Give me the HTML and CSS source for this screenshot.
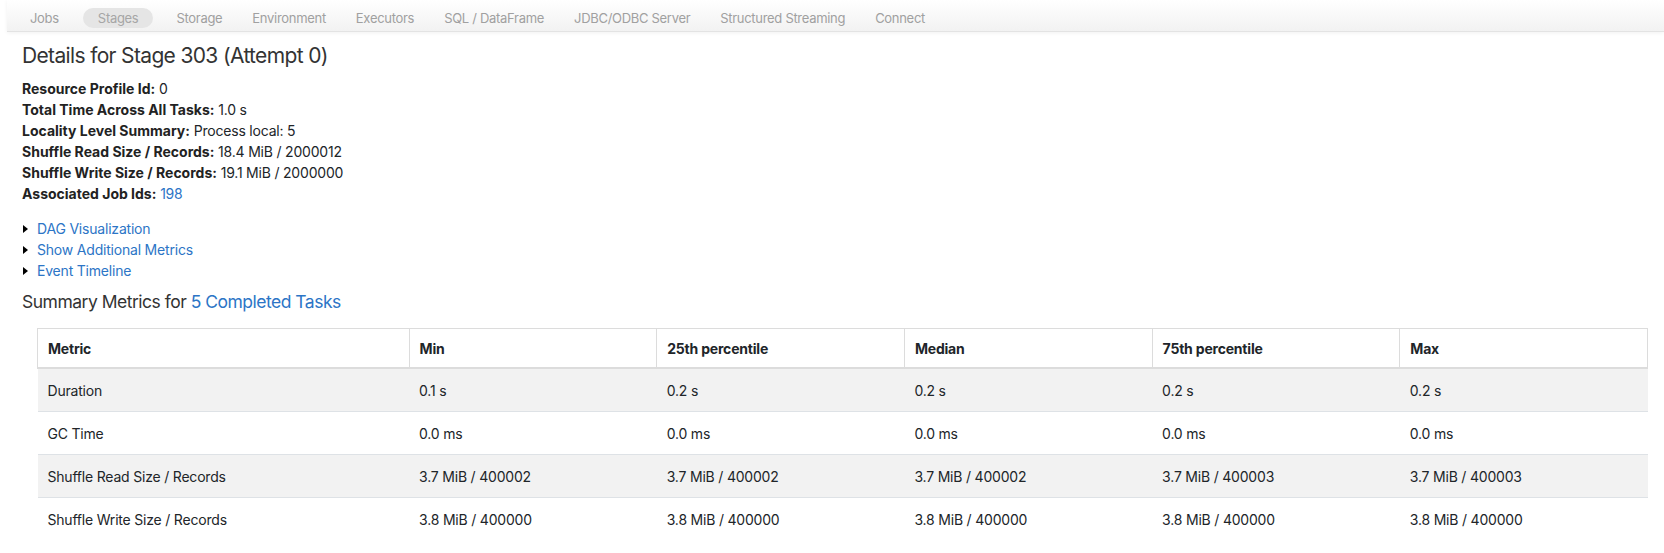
FILE: index.html
```html
<!DOCTYPE html>
<html lang="en">
<head>
<meta charset="utf-8">
<title>Stage Details</title>
<link rel="stylesheet" href="styles.css">
</head>
<body>
<nav class="navbar">
  <ul class="nav">
    <li><a class="nav-link" href="#">Jobs</a></li>
    <li><a class="nav-link active" href="#">Stages</a></li>
    <li><a class="nav-link" href="#">Storage</a></li>
    <li><a class="nav-link" href="#">Environment</a></li>
    <li><a class="nav-link" href="#">Executors</a></li>
    <li><a class="nav-link" href="#">SQL / DataFrame</a></li>
    <li><a class="nav-link" href="#">JDBC/ODBC Server</a></li>
    <li><a class="nav-link" href="#">Structured Streaming</a></li>
    <li><a class="nav-link" href="#">Connect</a></li>
  </ul>
</nav>
<main class="content">
  <h3 class="title">Details for Stage 303 (Attempt 0)</h3>
  <ul class="info">
    <li><strong>Resource Profile Id:</strong> 0</li>
    <li><strong>Total Time Across All Tasks:</strong> 1.0 s</li>
    <li><strong>Locality Level Summary:</strong> Process local: 5</li>
    <li><strong>Shuffle Read Size / Records:</strong> 18.4 MiB / 2000012</li>
    <li><strong>Shuffle Write Size / Records:</strong> 19.1 MiB / 2000000</li>
    <li><strong>Associated Job Ids:</strong> <a class="link" href="#">198</a></li>
  </ul>
  <ul class="toggles">
    <li><span class="arrow"></span><a class="link" href="#">DAG Visualization</a></li>
    <li><span class="arrow"></span><a class="link" href="#">Show Additional Metrics</a></li>
    <li><span class="arrow"></span><a class="link" href="#">Event Timeline</a></li>
  </ul>
  <h4 class="summary">Summary Metrics for <a class="link" href="#">5 Completed Tasks</a></h4>
  <div class="table-wrap">
    <table class="metrics">
      <thead>
        <tr>
          <th class="col-first">Metric</th>
          <th>Min</th>
          <th>25th percentile</th>
          <th>Median</th>
          <th>75th percentile</th>
          <th>Max</th>
        </tr>
      </thead>
      <tbody>
        <tr class="odd">
          <td>Duration</td><td>0.1 s</td><td>0.2 s</td><td>0.2 s</td><td>0.2 s</td><td>0.2 s</td>
        </tr>
        <tr>
          <td>GC Time</td><td>0.0 ms</td><td>0.0 ms</td><td>0.0 ms</td><td>0.0 ms</td><td>0.0 ms</td>
        </tr>
        <tr class="odd">
          <td>Shuffle Read Size / Records</td><td>3.7 MiB / 400002</td><td>3.7 MiB / 400002</td><td>3.7 MiB / 400002</td><td>3.7 MiB / 400003</td><td>3.7 MiB / 400003</td>
        </tr>
        <tr>
          <td>Shuffle Write Size / Records</td><td>3.8 MiB / 400000</td><td>3.8 MiB / 400000</td><td>3.8 MiB / 400000</td><td>3.8 MiB / 400000</td><td>3.8 MiB / 400000</td>
        </tr>
      </tbody>
    </table>
  </div>
</main>
</body>
</html>
```

FILE: styles.css
```css
* { box-sizing: border-box; }

html, body {
  margin: 0;
  padding: 0;
  background: #fff;
}

body {
  font-family: Inter, "Liberation Sans", sans-serif;
  font-size: 14px;
  line-height: 21px;
  letter-spacing: -0.2px;
  color: #212529;
  overflow: hidden;
}

a { text-decoration: none; }

.navbar {
  margin-left: 7px;
  height: 32px;
  background: linear-gradient(#ffffff, #f2f2f2);
  border-bottom: 1px solid #e3e3e3;
  box-shadow: 0 1px 4px rgba(0, 0, 0, 0.06);
}

.nav {
  list-style: none;
  margin: 0;
  padding: 8px 0 0 8px;
  display: flex;
}

.nav-link {
  display: block;
  height: 20px;
  line-height: 20px;
  padding: 0 15px;
  border-radius: 10px;
  color: #a0a0a0;
  font-size: 13px;
  letter-spacing: -0.3px;
}

.nav-link.active {
  margin: 0 8px 0 9px;
  background: #e5e5e5;
  color: #a6a6a6;
}

.content {
  padding: 12px 16px 0 22px;
}

.title {
  margin: 0;
  font-size: 21px;
  font-weight: 400;
  line-height: 24px;
  letter-spacing: -0.65px;
  color: #333;
}

.info {
  list-style: none;
  margin: 10px 0 0 0;
  padding: 0;
}

.info strong {
  font-weight: 700;
  color: #222;
  letter-spacing: 0;
}

.link { color: #2c75c6; }

.toggles {
  list-style: none;
  margin: 14px 0 0 0;
  padding: 0;
}

.toggles li {
  display: flex;
  align-items: center;
}

.arrow {
  width: 0;
  height: 0;
  border-top: 4px solid transparent;
  border-bottom: 4px solid transparent;
  border-left: 5px solid #000;
  margin: 0 9px 0 1px;
}

.summary {
  margin: 10px 0 0 0;
  font-size: 17.5px;
  font-weight: 400;
  line-height: 22px;
  letter-spacing: -0.5px;
  color: #333;
}

.table-wrap {
  margin: 15px 0 0 15px;
}

.metrics {
  width: 100%;
  border-collapse: collapse;
  table-layout: fixed;
}

.metrics th {
  text-align: left;
  font-weight: 700;
  font-size: 14px;
  letter-spacing: -0.2px;
  padding: 9px 10px 8px;
  border: 1px solid #dcdcdc;
  border-bottom: 2px solid #dcdcdc;
  background: #fff;
  width: 15.384%;
}

.metrics th.col-first { width: 23.077%; }

.metrics td {
  padding: 11px 10px 10px;
  border-top: 1px solid #dee2e6;
  font-size: 14px;
}

.metrics tr.odd td { background: #f2f2f2; }
```
